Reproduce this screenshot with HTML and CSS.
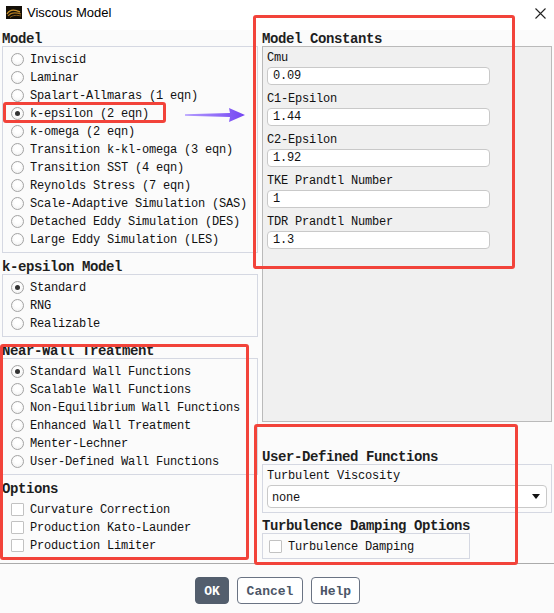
FILE: index.html
```html
<!DOCTYPE html>
<html>
<head>
<meta charset="utf-8">
<link rel="stylesheet" href="styles.css">
</head>
<body>
<div class="window">
  <div class="titlebar">
    <svg class="app-icon" viewBox="0 0 16 13" width="16" height="13">
      <rect x="0" y="0" width="16" height="13" fill="#140f08"/>
      <path d="M1 8 C4 3, 8 3, 14 6" stroke="#c8902a" stroke-width="1.4" fill="none"/>
      <path d="M2 10 C5 6, 9 6, 15 8" stroke="#b07a20" stroke-width="1.2" fill="none"/>
      <path d="M4 11.5 C7 9, 11 9, 15 10" stroke="#8a5e18" stroke-width="1" fill="none"/>
    </svg>
    <span class="title">Viscous Model</span>
    <svg class="close" viewBox="0 0 11 11" width="11" height="11">
      <path d="M0.5 0.5 L10.5 10.5 M10.5 0.5 L0.5 10.5" stroke="#222" stroke-width="1.1"/>
    </svg>
  </div>

  <div class="content">
    <div class="left">
      <div class="ghead first">Model</div>
      <div class="gbox">
        <div class="opt"><span class="radio"></span><span class="txt">Inviscid</span></div>
        <div class="opt"><span class="radio"></span><span class="txt">Laminar</span></div>
        <div class="opt"><span class="radio"></span><span class="txt">Spalart-Allmaras (1 eqn)</span></div>
        <div class="opt"><span class="radio on"></span><span class="txt">k-epsilon (2 eqn)</span></div>
        <div class="opt"><span class="radio"></span><span class="txt">k-omega (2 eqn)</span></div>
        <div class="opt"><span class="radio"></span><span class="txt">Transition k-kl-omega (3 eqn)</span></div>
        <div class="opt"><span class="radio"></span><span class="txt">Transition SST (4 eqn)</span></div>
        <div class="opt"><span class="radio"></span><span class="txt">Reynolds Stress (7 eqn)</span></div>
        <div class="opt"><span class="radio"></span><span class="txt">Scale-Adaptive Simulation (SAS)</span></div>
        <div class="opt"><span class="radio"></span><span class="txt">Detached Eddy Simulation (DES)</span></div>
        <div class="opt"><span class="radio"></span><span class="txt">Large Eddy Simulation (LES)</span></div>
      </div>

      <div class="ghead">k-epsilon Model</div>
      <div class="gbox">
        <div class="opt"><span class="radio on"></span><span class="txt">Standard</span></div>
        <div class="opt"><span class="radio"></span><span class="txt">RNG</span></div>
        <div class="opt"><span class="radio"></span><span class="txt">Realizable</span></div>
      </div>

      <div class="ghead">Near-Wall Treatment</div>
      <div class="gbox">
        <div class="opt"><span class="radio on"></span><span class="txt">Standard Wall Functions</span></div>
        <div class="opt"><span class="radio"></span><span class="txt">Scalable Wall Functions</span></div>
        <div class="opt"><span class="radio"></span><span class="txt">Non-Equilibrium Wall Functions</span></div>
        <div class="opt"><span class="radio"></span><span class="txt">Enhanced Wall Treatment</span></div>
        <div class="opt"><span class="radio"></span><span class="txt">Menter-Lechner</span></div>
        <div class="opt"><span class="radio"></span><span class="txt">User-Defined Wall Functions</span></div>
      </div>

      <div class="ghead">Options</div>
      <div class="gbox plain">
        <div class="opt"><span class="check"></span><span class="txt">Curvature Correction</span></div>
        <div class="opt"><span class="check"></span><span class="txt">Production Kato-Launder</span></div>
        <div class="opt"><span class="check"></span><span class="txt">Production Limiter</span></div>
      </div>
    </div>

    <div class="right">
      <div class="ghead first">Model Constants</div>
      <div class="panel">
        <div class="field"><div class="flabel">Cmu</div><div class="input">0.09</div></div>
        <div class="field"><div class="flabel">C1-Epsilon</div><div class="input">1.44</div></div>
        <div class="field"><div class="flabel">C2-Epsilon</div><div class="input">1.92</div></div>
        <div class="field"><div class="flabel">TKE Prandtl Number</div><div class="input">1</div></div>
        <div class="field"><div class="flabel">TDR Prandtl Number</div><div class="input">1.3</div></div>
      </div>

      <div class="ghead udf-head">User-Defined Functions</div>
      <div class="gbox udf-box">
        <div class="flabel">Turbulent Viscosity</div>
        <div class="select"><span class="txt">none</span><span class="caret"></span></div>
      </div>

      <div class="ghead tdo-head">Turbulence Damping Options</div>
      <div class="gbox tdo-box">
        <div class="opt"><span class="check"></span><span class="txt">Turbulence Damping</span></div>
      </div>
    </div>
  </div>

  <div class="sep"></div>

  <div class="buttons">
    <div class="btn primary ok">OK</div>
    <div class="btn cancel">Cancel</div>
    <div class="btn help">Help</div>
  </div>

  <div class="mark mark-keps"></div>
  <div class="mark mark-const"></div>
  <div class="mark mark-wall"></div>
  <div class="mark mark-udf"></div>
  <svg class="arrow" viewBox="0 0 62 18" width="62" height="18">
    <defs>
      <linearGradient id="ag" x1="0" y1="0" x2="1" y2="0">
        <stop offset="0" stop-color="#b39cff"/>
        <stop offset="1" stop-color="#7445f2"/>
      </linearGradient>
    </defs>
    <path d="M1 8.3 L46 7 L45 2 L61 9 L45 16 L46 11 L1 9.7 Z" fill="url(#ag)"/>
  </svg>
</div>
</body>
</html>
```

FILE: styles.css
```css
* { box-sizing: border-box; }

body {
  margin: 0;
  background: #ffffff;
  font-family: "Liberation Mono", "DejaVu Sans Mono", monospace;
  color: #111;
}

.window {
  position: relative;
  width: 554px;
  height: 613px;
  background: #fbfbfb;
  overflow: hidden;
}

.titlebar {
  height: 30px;
  background: #ffffff;
  display: flex;
  align-items: flex-start;
  padding: 6px 8px 0 6px;
}

.app-icon {
  flex: none;
  margin-right: 5px;
}

.title {
  flex: 1;
  font-family: "Liberation Sans", Arial, sans-serif;
  font-size: 13px;
  line-height: 14px;
  color: #000;
}

.close {
  flex: none;
  margin-top: 2px;
}

.content {
  display: flex;
}

.left {
  width: 258px;
  padding-left: 2px;
  flex: none;
}

.right {
  width: 290px;
  margin-left: 4px;
  flex: none;
}

.ghead {
  height: 16px;
  line-height: 18px;
  font-size: 14px;
  font-weight: bold;
  letter-spacing: -0.4px;
  color: #1e1e1e;
  margin-top: 5px;
  white-space: nowrap;
}

.ghead.first { margin-top: 0; }

.gbox {
  border: 1px solid #d5d8e2;
  padding: 3px 0 4px 0;
}

.gbox.plain { border-color: transparent; }

.opt {
  height: 18px;
  display: flex;
  align-items: center;
  padding-left: 8px;
  gap: 6px;
  font-size: 12px;
  letter-spacing: -0.2px;
  white-space: nowrap;
}

.txt {
  padding-top: 2px;
}

.radio {
  width: 13px;
  height: 13px;
  flex: none;
  border-radius: 50%;
  border: 1px solid #a3a3a3;
  background: radial-gradient(circle at 50% 40%, #ffffff 30%, #ededed 100%);
  display: flex;
  align-items: center;
  justify-content: center;
}

.radio.on::after {
  content: "";
  width: 5px;
  height: 5px;
  border-radius: 50%;
  background: #333333;
}

.check {
  width: 13px;
  height: 13px;
  flex: none;
  border: 1px solid #c2c2c2;
  border-radius: 1px;
  background: #ffffff;
}

.panel {
  height: 376px;
  border: 1px solid #bababa;
  background: #f0f0f0;
  padding: 2px 0 0 4px;
}

.field { margin-bottom: 5px; }

.flabel {
  height: 17px;
  line-height: 19px;
  font-size: 12px;
  letter-spacing: -0.2px;
  white-space: nowrap;
}

.input {
  margin-top: 1px;
  width: 223px;
  height: 18px;
  border: 1px solid #c9c9c9;
  border-radius: 4px;
  background: #ffffff;
  padding-left: 5px;
  font-size: 12px;
  line-height: 17px;
  letter-spacing: -0.2px;
}

.udf-head { margin-top: 26px; }

.udf-box {
  padding: 2px 4px 4px 4px;
}

.select {
  margin-top: 1px;
  height: 23px;
  border: 1px solid #c9c9c9;
  border-radius: 4px;
  background: #ffffff;
  display: flex;
  align-items: center;
  justify-content: space-between;
  padding: 0 6px 0 4px;
  font-size: 12px;
  letter-spacing: -0.2px;
}

.caret {
  width: 0;
  height: 0;
  border-left: 4.5px solid transparent;
  border-right: 4.5px solid transparent;
  border-top: 5px solid #111;
}

.tdo-head { margin-top: 4px; }

.tdo-box {
  width: 208px;
  padding: 3px 0 3px 0;
}

.tdo-box .opt { padding-left: 6px; gap: 6px; }

.sep {
  margin-top: 4px;
  height: 1px;
  background: #ababab;
}

.buttons {
  display: flex;
  justify-content: center;
  gap: 8px;
  padding-top: 13px;
  padding-left: 1px;
}

.btn {
  height: 27px;
  border: 1px solid #6a7383;
  border-radius: 4px;
  background: #ffffff;
  color: #4c5667;
  font-size: 13px;
  font-weight: bold;
  display: flex;
  align-items: center;
  justify-content: center;
  padding-top: 1px;
}

.btn.primary {
  background: #535e6d;
  border-color: #535e6d;
  color: #ffffff;
}

.ok { width: 34px; }
.cancel { width: 66px; }
.help { width: 49px; }

.mark {
  position: absolute;
  border: 3px solid #f2433a;
  border-radius: 3px;
}

.mark-keps { left: 3px; top: 102px; width: 163px; height: 21px; }
.mark-const { left: 253px; top: 15px; width: 262px; height: 254px; }
.mark-wall { left: 0px; top: 344px; width: 249px; height: 216px; }
.mark-udf { left: 254px; top: 424px; width: 264px; height: 141px; }

.arrow {
  position: absolute;
  left: 184px;
  top: 106px;
}
```
